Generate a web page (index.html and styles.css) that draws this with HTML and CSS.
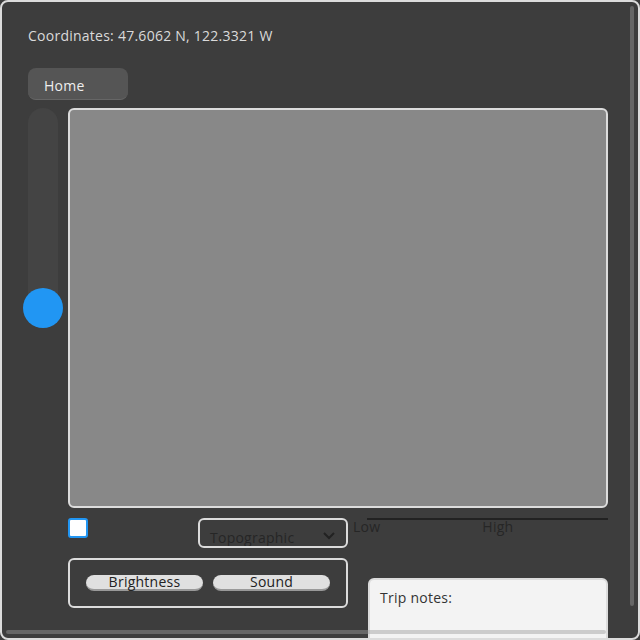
FILE: index.html
```html
<!DOCTYPE html>
<html>
<head>
<meta charset="utf-8">
<link rel="stylesheet" href="styles.css">
</head>
<body>
<div class="window">
  <div class="coords">Coordinates: 47.6062 N, 122.3321 W</div>
  <button class="home">Home</button>
  <div class="main">
    <div class="vslider">
      <div class="vtrack"><div class="vthumb"></div></div>
    </div>
    <div class="map"></div>
    <div class="spacer"></div>
    <div class="controls">
      <div class="left-row">
        <span class="check"></span>
        <div class="select"><span class="select-text">Topographic</span>
          <svg class="chev" width="14" height="9" viewBox="0 0 14 9"><path d="M2 2 L7 7 L12 2" fill="none" stroke="#222" stroke-width="2"/></svg>
        </div>
      </div>
      <div class="range">
        <div class="range-line"></div>
        <div class="range-labels"><span class="lbl-low">Low</span><span class="lbl-high">High</span></div>
      </div>
      <div class="btnbox">
        <button class="pill">Brightness</button>
        <button class="pill">Sound</button>
      </div>
      <div class="notes">Trip notes:</div>
    </div>
  </div>
  <div class="vscroll"></div>
  <div class="hscroll"></div>
</div>
</body>
</html>
```
FILE: styles.css
```css
html, body {
  margin: 0;
  padding: 0;
  background: #3d3d3d;
}
.window {
  position: relative;
  width: 640px;
  height: 640px;
  box-sizing: border-box;
  border: 2px solid #dcdcdc;
  border-radius: 8px;
  background: #3d3d3d;
  overflow: hidden;
  padding: 24px 0 0 26px;
  font-family: "Open Sans", sans-serif;
  font-size: 14px;
  letter-spacing: 0.25px;
}
.coords {
  color: #dadada;
  line-height: 20px;
  height: 20px;
}
.home {
  display: block;
  margin-top: 22px;
  width: 100px;
  height: 32px;
  box-sizing: border-box;
  border: none;
  border-bottom: 1px solid #666;
  border-radius: 8px;
  background: #555;
  color: #eee;
  font-family: inherit;
  font-size: 14px;
  letter-spacing: 0.25px;
  text-align: left;
  padding: 4px 0 0 16px;
}
.main {
  margin-top: 8px;
  display: grid;
  grid-template-columns: 30px 540px;
  column-gap: 10px;
  row-gap: 10px;
}
.vslider {
  height: 400px;
}
.vtrack {
  position: relative;
  width: 30px;
  height: 210px;
  border-radius: 15px;
  background: #444;
}
.vthumb {
  position: absolute;
  left: -5px;
  top: 180px;
  width: 40px;
  height: 40px;
  border-radius: 50%;
  background: #2196f3;
}
.map {
  height: 400px;
  box-sizing: border-box;
  border: 2px solid #dcdcdc;
  border-radius: 6px;
  background: #888;
}
.controls {
  display: grid;
  grid-template-columns: 280px 240px;
  column-gap: 20px;
  row-gap: 10px;
  align-items: start;
}
.left-row {
  display: flex;
  justify-content: space-between;
  align-items: flex-start;
  height: 30px;
}
.check {
  width: 20px;
  height: 20px;
  box-sizing: border-box;
  border: 2px solid #2196f3;
  border-radius: 3px;
  background: #fff;
}
.select {
  width: 150px;
  height: 30px;
  box-sizing: border-box;
  border: 2px solid #dcdcdc;
  border-radius: 6px;
  display: flex;
  align-items: flex-end;
  justify-content: space-between;
  padding: 0 10px 0 10px;
  color: #262626;
  overflow: hidden;
}
.select-text {
  line-height: 16px;
  margin-bottom: 0;
}
.chev {
  margin-bottom: 6px;
}
.range {
  margin-left: -1px;
}
.range-line {
  height: 2px;
  background: #222;
}
.range-labels {
  display: flex;
  color: #262626;
  line-height: 14px;
  margin-top: 0;
}
.lbl-low {
  margin-left: -14px;
}
.lbl-high {
  margin-left: 102px;
}
.btnbox {
  height: 50px;
  box-sizing: border-box;
  border: 2px solid #dcdcdc;
  border-radius: 6px;
  display: flex;
  align-items: center;
  gap: 10px;
  padding: 0 16px;
}
.pill {
  flex: 1;
  height: 16px;
  box-sizing: border-box;
  border: none;
  border-bottom: 2px solid #999;
  border-radius: 8px;
  background: #e0e0e0;
  color: #222;
  font-family: inherit;
  font-size: 14px;
  letter-spacing: 0.25px;
  line-height: 14px;
  padding: 0;
}
.notes {
  margin-top: 20px;
  height: 80px;
  box-sizing: border-box;
  border: 2px solid #dcdcdc;
  border-radius: 6px;
  background: #f3f3f3;
  color: #333;
  padding: 9px 10px;
  line-height: 18px;
}
.vscroll {
  position: absolute;
  right: 4px;
  top: 4px;
  width: 4px;
  height: 600px;
  background: rgba(154, 154, 154, 0.44);
  border-radius: 2px;
}
.hscroll {
  position: absolute;
  left: 4px;
  bottom: 4px;
  width: 600px;
  height: 4px;
  background: rgba(154, 154, 154, 0.44);
  border-radius: 2px;
}
```
